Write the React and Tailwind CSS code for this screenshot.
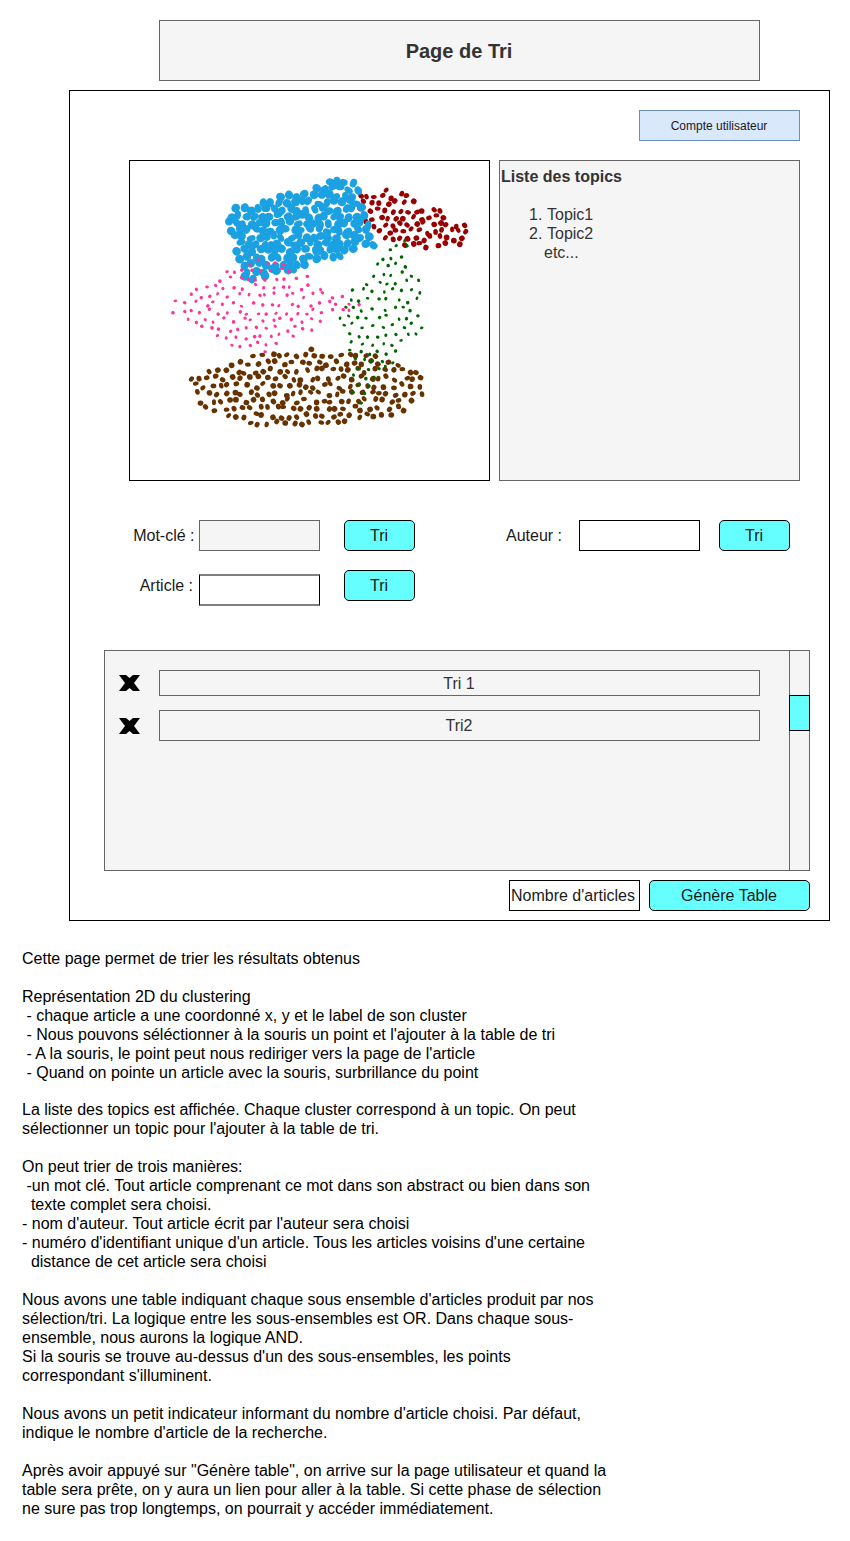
import React from "react";

// Générateur déterministe pour que le nuage de points reste stable
function makeRandom(seed) {
  let s = seed;
  return () => {
    s = (s * 1664525 + 1013904223) % 4294967296;
    return s / 4294967296;
  };
}

function inside(poly, x, y) {
  let hit = false;
  for (let i = 0, j = poly.length - 1; i < poly.length; j = i++) {
    const [xi, yi] = poly[i];
    const [xj, yj] = poly[j];
    if (yi > y !== yj > y && x < ((xj - xi) * (y - yi)) / (yj - yi) + xi) hit = !hit;
  }
  return hit;
}

// Grille décalée une ligne sur deux, puis bruit sur chaque point
function makeCluster(poly, step, jitter, seed) {
  const rand = makeRandom(seed);
  const xs = poly.map((p) => p[0]);
  const ys = poly.map((p) => p[1]);
  const pts = [];
  let row = 0;
  for (let y = Math.min(...ys); y <= Math.max(...ys); y += step * 0.88) {
    const shift = row % 2 ? step / 2 : 0;
    for (let x = Math.min(...xs) - step; x <= Math.max(...xs); x += step) {
      const px = x + shift + (rand() - 0.5) * jitter;
      const py = y + (rand() - 0.5) * jitter;
      const ang = rand() * 180;
      const squash = 0.7 + rand() * 0.3;
      if (inside(poly, px, py)) pts.push({ x: px, y: py, ang, squash });
    }
    row++;
  }
  return pts;
}

// Coordonnées relatives au cadre du graphe
const clusters = [
  {
    color: "#990000", r: 2.9, step: 8, jitter: 5, seed: 11,
    poly: [[226, 32], [265, 28], [340, 64], [338, 84], [290, 91], [257, 78], [233, 66]],
  },
  {
    color: "#1ba1e2", r: 4.5, step: 7.8, jitter: 4, seed: 23,
    poly: [[94, 50], [225, 14], [245, 85], [115, 122]],
  },
  {
    color: "#ff3399", r: 1.8, step: 9.4, jitter: 5.5, seed: 37,
    poly: [[29, 146], [103, 106], [133, 93], [232, 143], [167, 177], [127, 196], [80, 174]],
  },
  {
    color: "#663300", r: 2.9, step: 8.6, jitter: 5, seed: 41,
    poly: [[60, 214], [120, 195], [180, 187], [240, 193], [295, 213], [296, 235], [270, 253], [200, 268], [150, 270], [80, 251], [60, 235]],
  },
  {
    color: "#006600", r: 1.8, step: 9.8, jitter: 5.5, seed: 59,
    poly: [[272, 70], [289, 117], [295, 168], [273, 193], [253, 213], [230, 246], [221, 227], [216, 183], [209, 157], [211, 140], [227, 122], [257, 90]],
  },
];

function Scatter() {
  return (
    <svg width="359" height="319" viewBox="0 0 359 319" className="block">
      {clusters.map((c) => (
        <g key={c.color} fill={c.color}>
          {makeCluster(c.poly, c.step, c.jitter, c.seed).map((p, i) => (
            <ellipse
              key={i}
              cx={p.x}
              cy={p.y}
              rx={c.r}
              ry={c.r * p.squash}
              transform={`rotate(${p.ang} ${p.x} ${p.y})`}
            />
          ))}
        </g>
      ))}
    </svg>
  );
}

function CrossIcon() {
  return (
    <svg width="21" height="16" viewBox="0 0 21 16" className="block shrink-0">
      <polygon
        fill="#000"
        points="0,0 7,0 10.5,3 14,0 21,0 15,8 21,16 14,16 10.5,13 7,16 0,16 6,8"
      />
    </svg>
  );
}

function TriButton() {
  return (
    <button className="w-[71px] h-[31px] pr-[1px] bg-[#66ffff] border border-black rounded-[5px] text-base text-[#1a1a1a]">
      Tri
    </button>
  );
}

const descriptionTop = `Cette page permet de trier les résultats obtenus

Représentation 2D du clustering
 - chaque article a une coordonné x, y et le label de son cluster
 - Nous pouvons séléctionner à la souris un point et l'ajouter à la table de tri
 - A la souris, le point peut nous rediriger vers la page de l'article
 - Quand on pointe un article avec la souris, surbrillance du point
`;

const descriptionBottom = `La liste des topics est affichée. Chaque cluster correspond à un topic. On peut
sélectionner un topic pour l'ajouter à la table de tri.

On peut trier de trois manières:
 -un mot clé. Tout article comprenant ce mot dans son abstract ou bien dans son
  texte complet sera choisi.
- nom d'auteur. Tout article écrit par l'auteur sera choisi
- numéro d'identifiant unique d'un article. Tous les articles voisins d'une certaine
  distance de cet article sera choisi

Nous avons une table indiquant chaque sous ensemble d'articles produit par nos
sélection/tri. La logique entre les sous-ensembles est OR. Dans chaque sous-
ensemble, nous aurons la logique AND.
Si la souris se trouve au-dessus d'un des sous-ensembles, les points
correspondant s'illuminent.

Nous avons un petit indicateur informant du nombre d'article choisi. Par défaut,
indique le nombre d'article de la recherche.

Après avoir appuyé sur "Génère table", on arrive sur la page utilisateur et quand la
table sera prête, on y aura un lien pour aller à la table. Si cette phase de sélection
ne sure pas trop longtemps, on pourrait y accéder immédiatement.`;

export default function App() {
  return (
    <div className="w-[850px] h-[1541px] bg-white overflow-hidden pt-[20px] font-['Liberation_Sans',Arial,sans-serif] text-black">
      <div className="ml-[159px] w-[601px] h-[61px] pr-[1px] bg-[#f5f5f5] border border-[#666666] flex items-center justify-center text-xl font-bold text-[#333333]">
        Page de Tri
      </div>

      <div className="mt-[9px] ml-[69px] w-[761px] h-[831px] border border-black">
        <div className="mt-[19px] ml-[569px] w-[161px] h-[31px] pr-[1px] bg-[#dae8fc] border border-[#6c8ebf] flex items-center justify-center text-xs text-[#1a1a1a]">
          Compte utilisateur
        </div>

        <div className="mt-[19px] ml-[59px] flex gap-[9px]">
          <div className="w-[361px] h-[321px] bg-white border border-black">
            <Scatter />
          </div>
          <div className="w-[301px] h-[321px] bg-[#f5f5f5] border border-[#666666] pl-[1px] pt-[6px] text-base leading-[19px] text-[#333333]">
            <div className="font-bold">Liste des topics</div>
            <ol className="mt-[19px] pl-[28px]">
              <li className="flex"><span className="w-[18px]">1.</span>Topic1</li>
              <li className="flex"><span className="w-[18px]">2.</span>Topic2</li>
              <li className="pl-[15px]">etc...</li>
            </ol>
          </div>
        </div>

        <div className="mt-[39px] flex items-center">
          <div className="w-[125px] pr-[0.5px] text-right text-base text-[#1a1a1a]">Mot-clé :</div>
          <div className="ml-[4px] w-[121px] h-[31px] bg-[#f5f5f5] border border-[#666666]" />
          <div className="ml-[24px]"><TriButton /></div>
          <div className="w-[147px] text-right text-base text-[#1a1a1a]">Auteur :</div>
          <div className="ml-[17px] w-[121px] h-[31px] bg-white border border-black" />
          <div className="ml-[19px]"><TriButton /></div>
        </div>

        <div className="mt-[19px] flex items-start h-[36px]">
          <div className="w-[123px] mt-[4px] text-right text-base text-[#1a1a1a]">Article :</div>
          <div className="ml-[6px] mt-[4px] w-[121px] h-[32px] bg-white border border-black border-y-2 border-y-[#808080]" />
          <div className="ml-[24px]"><TriButton /></div>
        </div>

        <div className="relative mt-[44px] ml-[34px] w-[706px] h-[221px] bg-[#f5f5f5] border border-[#666666] flex text-base text-[#333333]">
          <div className="w-[684px] pl-[14px] pt-[19px]">
            <div className="flex items-center gap-[19px] h-[26px]">
              <CrossIcon />
              <div className="w-[601px] h-[26px] pt-[1px] pr-[1px] border border-[#666666] flex items-center justify-center">Tri 1</div>
            </div>
            <div className="mt-[14px] flex items-center gap-[19px] h-[31px]">
              <CrossIcon />
              <div className="w-[601px] h-[31px] pr-[1px] border border-[#666666] flex items-center justify-center">Tri2</div>
            </div>
          </div>
          <div className="flex-1 border-l border-[#666666]" />
          <div className="absolute right-[-1px] top-[44px] w-[21px] h-[36px] bg-[#66ffff] border border-black" />
        </div>

        <div className="mt-[9px] ml-[439px] flex gap-[9px] text-base text-[#1a1a1a]">
          <div className="w-[131px] h-[31px] pl-[1px] bg-white border border-black flex items-center whitespace-nowrap">
            Nombre d'articles
          </div>
          <button className="w-[161px] h-[31px] pr-[1px] bg-[#66ffff] border border-black rounded-[5px]">
            Génère Table
          </button>
        </div>
      </div>

      <div className="mt-[28px] ml-[22px] whitespace-pre text-base leading-[19px] text-black">
        <div>{descriptionTop}</div>
        <div className="mt-[18px]">{descriptionBottom}</div>
      </div>
    </div>
  );
}
